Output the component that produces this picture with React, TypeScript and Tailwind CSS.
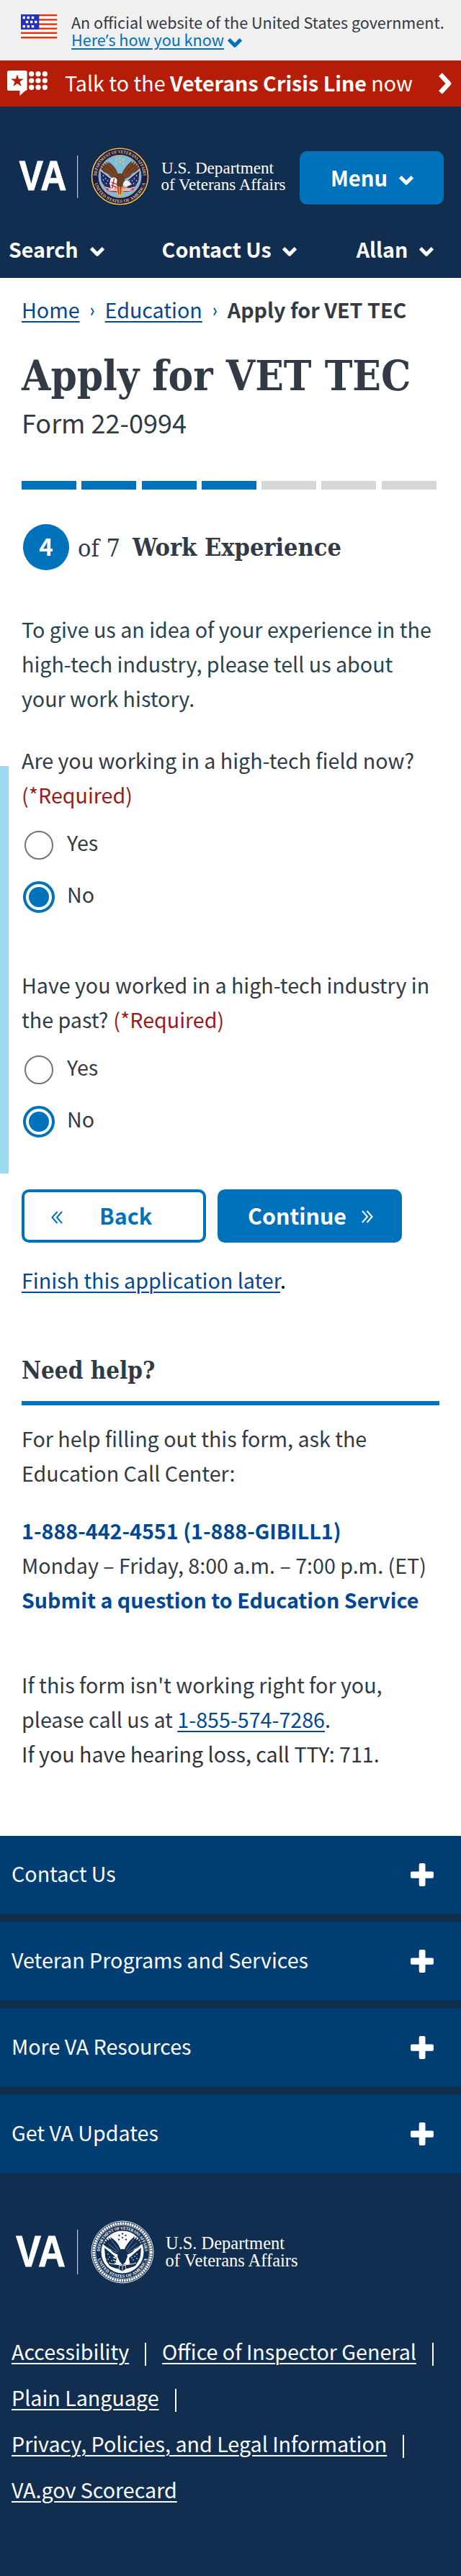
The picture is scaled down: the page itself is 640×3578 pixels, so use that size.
import React from 'react';

const SERIF = '"Liberation Serif", serif';

function ChevronDown({ className = '' }: { className?: string }) {
  return (
    <svg className={className} width="22" height="15" viewBox="0 0 22 15" fill="none">
      <path d="M2.6 2.8 11 11.2l8.4-8.4" stroke="currentColor" strokeWidth="5" strokeLinejoin="round" />
    </svg>
  );
}

function Flag() {
  const stripes = [0, 6.2, 12.4, 18.5, 24.6, 31];
  const stars = [
    [2.6, 2.8], [8.6, 2.8], [14.8, 2.8],
    [6.8, 8.8], [13, 8.8], [19, 8.8],
    [2.6, 15], [8.6, 15], [14.8, 15],
  ];
  return (
    <svg width="50" height="34" viewBox="0 0 50 34" className="mt-px shrink-0">
      <rect width="50" height="33" fill="#fff" />
      {stripes.map((y) => <rect key={y} y={y} width="50" height="2.4" fill="#f42c02" />)}
      <rect width="25.3" height="21" fill="#2131c4" />
      {stars.map(([x, y]) => <rect key={`${x}-${y}`} x={x} y={y} width="3.4" height="3.4" fill="#fff" />)}
    </svg>
  );
}

function CrisisIcon() {
  return (
    <svg width="57" height="36" viewBox="0 0 57 36" className="shrink-0">
      <path d="M2.5 0h22.6a2.5 2.5 0 0 1 2.5 2.5v23a2.5 2.5 0 0 1-2.5 2.5L17.5 35V28H2.5A2.5 2.5 0 0 1 0 25.500V2.500A2.500 2.500 0 0 1 2.500 0z" fill="#fff" />
      <path d="M14 5.200l2.100 6.300h6.900l-5.500 4 2.100 6.500-5.600-4-5.600 4 2.100-6.500-5.500-4h6.900z" fill="#b51d09" />
      {[33.7, 43, 52.3].map((x) => [4.7, 14, 23.3].map((y) => <circle key={`${x}-${y}`} cx={x} cy={y} r="3.6" fill="#fff" />))}
    </svg>
  );
}

function Wings({ fill, line }: { fill: string; line: string }) {
  return (
    <>
      <path d="M-2-1C-4-9-8-15-17-21l1.500 4-4.500-3.500 1.500 4.500-5-3 2 4.500-5-2 3 4.500-4-1c2 5 6 8 11 9.500C-14 1-9 3-5 4z" fill={fill} />
      <path d="M2-1C4-9 9-15 17-22l-1 4.500 4.500-4-1.500 5 5.500-3.500-2.500 5 5-2-3 4.500 4-1c-2 5-6 8-11 9.500C14 1 9 3 5 4z" fill={fill} />
      <path d="M-4-1-15-16M-6 0l-14-12M-8 1l-14-8M4-1 15-17M6 0l14-13M8 1l14-9" stroke={line} strokeWidth=".7" fill="none" />
      <path d="M-5-2C-3-5 3-5 5-2l2 8-3 8-4 4-4-5-3-7z" fill={fill} />
    </>
  );
}

function Stars({ fill }: { fill: string }) {
  const pts = [[-4.5, -23], [4.500, -23], [0, -20], [-5, -17.500], [5, -17.500], [0, -25.500]];
  return (
    <>
      {pts.map(([x, y]) => (
        <path key={`${x}-${y}`} transform={`translate(${x} ${y})`} d="M0-2 .5-.6 1.900-.6.800.3 1.200 1.600 0 .8-1.200 1.600-.8.3-1.900-.6-.5-.6z" fill={fill} />
      ))}
    </>
  );
}

function RingText({ id, fill, top, bottom, size }: { id: string; fill: string; top: number; bottom: number; size: number }) {
  return (
    <>
      <defs>
        <path id={`${id}-top`} d={`M${-top} 0A${top} ${top} 0 0 1 ${top} 0`} />
        <path id={`${id}-bottom`} d={`M${-bottom} 0A${bottom} ${bottom} 0 0 0 ${bottom} 0`} />
      </defs>
      <text fontFamily={SERIF} fontWeight="700" fontSize={size} fill={fill}>
        <textPath href={`#${id}-top`} startOffset="1" textLength={top * 3.14 - 2} lengthAdjust="spacingAndGlyphs">DEPARTMENT OF VETERANS AFFAIRS</textPath>
      </text>
      <text fontFamily={SERIF} fontWeight="700" fontSize={size} fill={fill}>
        <textPath href={`#${id}-bottom`} startOffset={bottom * 0.27} textLength={bottom * 2.6} lengthAdjust="spacingAndGlyphs">UNITED STATES OF AMERICA</textPath>
      </text>
    </>
  );
}

function ColorSeal() {
  return (
    <g transform="translate(166.500 245)">
      <circle r="40.700" fill="#16163c" />
      <circle r="39" fill="#1d1b4e" stroke="#e9bd3a" strokeWidth="1.700" />
      <circle r="29.500" fill="#7dbbdc" stroke="#d9b54a" strokeWidth=".9" />
      <RingText id="seal" fill="#d8c482" top={32.2} bottom={36.6} size={6.2} />
      <Stars fill="#f2d23c" />
      <path d="M-27-8-7 7-10 19C-18 17-24 12-26 6z" fill="#232a66" />
      <path d="M27-8 8 7l3 12C18 17 24 12 26 5z" fill="#232a66" />
      <path d="M-27.500-8.500-6 8M27.500-9.500 6 9" stroke="#e9e4cf" strokeWidth="1" />
      <g fill="#fff">
        {[[-23, -1], [-20, 3], [-23, 5], [-17, 6], [-19, 10], [-14, 10], [23, -1], [20, 3], [23, 6], [17, 6], [19, 10], [15, 10], [13, 6]].map(([x, y]) => (
          <circle key={`${x}-${y}`} cx={x} cy={y} r=".8" />
        ))}
      </g>
      <path d="M-23 12C-14 19-6 14-1 16 6 14 14 19 23 12l-5 7C10 23 4 20 0 24-6 20-12 23-18 19z" fill="#c8283c" />
      <path d="M-20 15c6 3 12 1 18 3M20 15c-6 3-12 1-18 3M-16 18.500c5 1 9 0 13 1M16 18.500c-5 1-9 0-13 1" stroke="#fff" strokeWidth="1.300" fill="none" />
      <Wings fill="#6b3d22" line="#94603a" />
      <path d="M-13 4c3-4 8-3 9 1l-1 9-6 5c-3-4-4-10-2-15z" fill="#fff" />
      <path d="m-12 8 7 3M-12 12l7 3M-8 3l-3 14" stroke="#c8283c" strokeWidth="1.500" />
      <path d="M5 8c4-4 9-2 10 3-4 4-8 4-11 1z" fill="#f2f2f2" />
      <path d="m14 10 3 1.500-3 1z" fill="#e9bd3a" />
      <path d="m-5 14 3 13M-1 14l1 14M3 14 2 27M6 13 4 23" stroke="#e3b53b" strokeWidth="1.500" />
      <path d="m-3 15 1.500 10M1 15v10" stroke="#c8283c" strokeWidth="1.200" />
    </g>
  );
}

function MonoSeal() {
  return (
    <g transform="translate(170 3128)">
      <circle r="43" fill="none" stroke="#fff" strokeWidth=".9" />
      <circle r="39.800" fill="none" stroke="#fff" strokeWidth="3.600" strokeDasharray="2.500 .9" />
      <circle r="37.400" fill="none" stroke="#fff" strokeWidth=".6" />
      <circle r="29.500" fill="#fff" />
      <RingText id="footer-seal" fill="#fff" top={31.2} bottom={35.6} size={6.2} />
      <Stars fill="#112e51" />
      <path d="M-25-6-8 8-10 20C-18 17-23 12-24 6zM26-6 9 8l2 12C18 17 24 12 25 5z" fill="#112e51" />
      <path d="M-24 10C-14 19-6 16-1 18 6 16 14 19 23 11l-5 8C10 23 4 22 0 27-6 22-12 23-18 19z" fill="#112e51" />
      <path d="M-19 15c6 3 12 1 18 4M19 15c-6 3-12 1-18 4" stroke="#fff" strokeWidth="1" fill="none" />
      <Wings fill="#112e51" line="#8fa0b4" />
      <path d="M-27-9.500-8 6M27-10 7 9" stroke="#fff" strokeWidth="2.200" />
      <g fill="#fff">
        {[[-20, 3], [-18, 7], [-20, 10], [-15, 12], [20, 3], [17, 6], [20, 9], [15, 11], [13, 8]].map(([x, y]) => (
          <circle key={`${x}-${y}`} cx={x} cy={y} r=".8" />
        ))}
      </g>
      <path d="m-13 7 7 3M-13 11l7 3M-11 15l7 3M-9 4l-2 5" stroke="#fff" strokeWidth="1.300" />
      <path d="m-4 18-1 7M0 18v9M4 18l1 7" stroke="#fff" strokeWidth=".8" />
    </g>
  );
}

function HeaderLogo() {
  return (
    <svg width="380" height="84" viewBox="26 203 380 84" className="shrink-0 overflow-visible" fill="#fff">
      <text x="26.500" y="264" fontFamily='"Liberation Sans", sans-serif' fontWeight="700" fontSize="58" textLength="66" lengthAdjust="spacingAndGlyphs" stroke="#fff" strokeWidth=".8">VA</text>
      <rect x="107" y="216" width="1.200" height="59" fill="#c5cbd3" />
      <ColorSeal />
      <text x="224" y="240.500" fontFamily={SERIF} fontWeight="400" fontSize="23.600" textLength="156" lengthAdjust="spacingAndGlyphs">U.S. Department</text>
      <text x="223.500" y="263.500" fontFamily={SERIF} fontWeight="400" fontSize="23.600" textLength="173" lengthAdjust="spacingAndGlyphs">of Veterans Affairs</text>
    </svg>
  );
}

function FooterLogo() {
  return (
    <svg width="400" height="90" viewBox="20 3083 400 90" className="overflow-visible" fill="#fff">
      <text x="22" y="3148" fontFamily='"Liberation Sans", sans-serif' fontWeight="700" fontSize="61" textLength="69" lengthAdjust="spacingAndGlyphs" stroke="#fff" strokeWidth=".8">VA</text>
      <rect x="107" y="3097" width="1.200" height="62" fill="#c5cbd3" />
      <MonoSeal />
      <text x="230" y="3123.500" fontFamily={SERIF} fontSize="25" textLength="165" lengthAdjust="spacingAndGlyphs">U.S. Department</text>
      <text x="229.500" y="3148" fontFamily={SERIF} fontSize="25" textLength="184" lengthAdjust="spacingAndGlyphs">of Veterans Affairs</text>
    </svg>
  );
}

function Radio({ label, checked = false }: { label: string; checked?: boolean }) {
  return (
    <label className="flex h-12 items-start">
      {checked ? (
        <span className="mt-[6px] ml-[2px] flex size-[44px] shrink-0 items-center justify-center rounded-full border-4 border-[#0071bb] bg-white">
          <span className="size-[28px] rounded-full bg-[#0071bb]" />
        </span>
      ) : (
        <span className="mt-[8px] mr-[2px] ml-[4px] size-[40px] shrink-0 rounded-full border-2 border-[#757575] bg-white" />
      )}
      <span className="ml-[17px]">{label}</span>
    </label>
  );
}

function Question({ first, second = '', className = '' }: { first: string; second?: string; className?: string }) {
  return (
    <fieldset className={className}>
      <legend className="mb-[18px]">
        <span className="block">{first}</span>
        <span className="flex gap-[7px]">
          {second && <span>{second}</span>}
          <span className="text-[#981b1e]">(*Required)</span>
        </span>
      </legend>
      <div className="flex flex-col gap-6">
        <Radio label="Yes" />
        <Radio label="No" checked />
      </div>
    </fieldset>
  );
}

function FooterRow({ label }: { label: string }) {
  return (
    <button className="flex h-[108px] w-full items-center justify-between bg-[#003e73] pr-[38px] pl-4 text-left">
      <span className="mb-[4px]">{label}</span>
      <svg width="32" height="32" viewBox="0 0 32 32" fill="#fff">
        <rect y="11.500" width="32" height="9.300" rx="2" />
        <rect x="11.700" width="8.800" height="32" rx="2" />
      </svg>
    </button>
  );
}

function FooterLink({ label, bar = true }: { label: string; bar?: boolean }) {
  return (
    <>
      <a className="underline decoration-2 underline-offset-[4px]">{label}</a>
      {bar && <span className="mx-[22px] mt-[8px] h-8 w-[2px] bg-white" />}
    </>
  );
}

const NAV = [
  { label: 'Search', space: 'ml-[12px]', gap: 'gap-[15px]' },
  { label: 'Contact Us', space: 'ml-[79px]', gap: 'gap-[14px]' },
  { label: 'Allan', space: 'ml-[82px]', gap: 'gap-[15px]' },
];

const LINK = 'text-[#004795] underline decoration-2 underline-offset-[4px]';

export default function App() {
  return (
    <div className="w-[640px] overflow-hidden bg-white font-['Noto_Sans_CJK_SC','Noto_Sans',sans-serif] text-[28.650px] leading-[48px] whitespace-nowrap text-[#323a45]">
      <div className="flex h-[84px] bg-[#f0f0f0] pt-[19px] pl-[29px] text-[21.570px] leading-[24px]">
        <Flag />
        <div className="ml-[20px]">
          <p>An official website of the United States government.</p>
          <p className="flex items-center text-[#0071bb]">
            <span className="underline decoration-2 underline-offset-[3px]">
              Here<span className="font-['Open_Sans'] leading-none">’</span>s how you know
            </span>
            <ChevronDown className="mt-[8px] ml-[4px]" />
          </p>
        </div>
      </div>

      <div className="flex h-16 items-center bg-[#b51d09] pl-[10px] text-white">
        <CrisisIcon />
        <p className="mb-[2px] ml-[23px] w-[485px]">
          Talk to the <b>Veterans Crisis Line</b> now
        </p>
        <svg width="20" height="30" viewBox="0 0 20 30" fill="none" className="ml-[33px]">
          <path d="M3.500 2.500 15 15 3.500 27.500" stroke="#fff" strokeWidth="6.500" strokeLinejoin="round" />
        </svg>
      </div>

      <header className="h-[238px] bg-[#112e51] pt-[55px] font-bold text-white">
        <div className="flex h-[84px] items-center pl-[26px]">
          <HeaderLogo />
          <button className="mt-[4px] ml-[10px] flex h-[74px] w-[200px] items-center justify-center gap-[15px] rounded-[10px] bg-[#0071bb] text-[29.200px]">
            <span className="mb-[3px] ml-[2px]">Menu</span>
            <ChevronDown className="mt-[6px]" />
          </button>
        </div>
        <nav className="mt-[43px] flex leading-8">
          {NAV.map((n) => (
            <a key={n.label} className={`flex items-center ${n.space} ${n.gap}`}>
              {n.label}
              <ChevronDown className="mt-[6px]" />
            </a>
          ))}
        </nav>
      </header>

      <main className="h-[2164px] px-[30px] pt-[20px]">
        <div className="flex">
          <a className={LINK}>Home</a>
          <span className="w-[35px] text-center font-['Lato'] text-[26px] text-[#004795]">›</span>
          <a className={LINK}>Education</a>
          <span className="w-[35px] text-center font-['Lato'] text-[26px] text-[#004795]">›</span>
          <b>Apply for VET TEC</b>
        </div>
        <h1 className="mt-[36px] font-['DejaVu_Serif_Condensed','DejaVu_Serif',serif] text-[57.840px] leading-[64px] font-bold">Apply for VET TEC</h1>
        <p className="mt-[8px] text-[36px]">Form 22-0994</p>

        <div className="mt-[58px] flex h-3 gap-[7.300px]">
          {[1, 2, 3, 4, 5, 6, 7].map((n) => (
            <div key={n} className={`w-[76px] ${n <= 4 ? 'bg-[#0071bb]' : 'bg-[#d6d7d9]'}`} />
          ))}
        </div>

        <div className="mt-12 flex h-16 items-center font-['DejaVu_Serif_Condensed','DejaVu_Serif',serif] text-[34px] leading-[64px]">
          <span className="ml-[2px] flex size-16 items-center justify-center rounded-full bg-[#0071bb] font-['Noto_Sans_CJK_SC',sans-serif] text-[33px] font-bold text-white">
            <span className="mb-[4px]">4</span>
          </span>
          <span className="ml-[12px] w-[76px] pt-[2px]">of 7</span>
          <b className="mb-[1px]">Work Experience</b>
        </div>

        <p className="mt-[58px] text-[#29434e]">
          To give us an idea of your experience in the
          <br />
          high-tech industry, please tell us about
          <br />
          your work history.
        </p>

        <form className="relative mt-[38px]">
          <span className="absolute top-[32px] -left-[30px] h-[566px] w-[12px] bg-[#9bdaf1]" />
          <Question first="Are you working in a high-tech field now?" />
          <Question first="Have you worked in a high-tech industry in" second="the past?" className="mt-[78px]" />
        </form>

        <div className="mt-[74px] flex gap-4 text-[30.400px] font-bold">
          <button className="flex h-[74px] w-[256px] items-center rounded-[10px] border-4 border-[#0071bb] text-[#0071bb]">
            <svg width="16" height="18" viewBox="0 0 16 18" fill="none" className="mt-[4px] ml-[37px]">
              <path d="M8.500 1 1.500 9l7 8M15 1 8 9l7 8" stroke="currentColor" strokeWidth="2" />
            </svg>
            <span className="mb-[3px] ml-[51px]">Back</span>
          </button>
          <button className="flex h-[74px] w-[256px] items-center rounded-[10px] bg-[#0071bb] text-white">
            <span className="mb-[3px] ml-[42px] w-[158px] text-left">Continue</span>
            <svg width="16" height="18" viewBox="0 0 16 18" fill="none" className="mt-[2px]">
              <path d="m1 1 7 8-7 8M7.500 1l7 8-7 8" stroke="currentColor" strokeWidth="2" />
            </svg>
          </button>
        </div>
        <p className="mt-[28px] text-black">
          <a className={LINK}>Finish this application later</a>.
        </p>

        <h2 className="mt-[78px] h-[72px] border-b-[6px] border-[#0071bb] font-['DejaVu_Serif_Condensed','DejaVu_Serif',serif] text-[32.900px] font-bold">Need help?</h2>
        <p className="mt-[22px]">
          For help filling out this form, ask the
          <br />
          Education Call Center:
        </p>
        <p className="mt-[32px]">
          <b className="text-[#004795]">1-888-442-4551 (1-888-GIBILL1)</b>
          <br />
          Monday – Friday, 8:00 a.m. – 7:00 p.m. (ET)
          <br />
          <b className="text-[#004795]">Submit a question to Education Service</b>
        </p>
        <p className="mt-[70px]">
          If this form isn't working right for you,
          <br />
          please call us at <a className={LINK}>1-855-574-7286</a>.
          <br />
          <span className="text-[#2e343b]">If you have hearing loss, call TTY: 711.</span>
        </p>
      </main>

      <footer className="h-[1028px] bg-[#112e51] text-white">
        <div className="flex flex-col gap-3">
          <FooterRow label="Contact Us" />
          <FooterRow label="Veteran Programs and Services" />
          <FooterRow label="More VA Resources" />
          <FooterRow label="Get VA Updates" />
        </div>
        <div className="mt-[65px] ml-[20px] h-[90px]">
          <FooterLogo />
        </div>
        <div className="mt-[61px] pl-4 leading-[64px]">
          <div className="flex items-center">
            <FooterLink label="Accessibility" />
            <FooterLink label="Office of Inspector General" />
          </div>
          <div className="flex items-center">
            <FooterLink label="Plain Language" />
          </div>
          <div className="flex items-center">
            <FooterLink label="Privacy, Policies, and Legal Information" />
          </div>
          <div className="flex items-center">
            <FooterLink label="VA.gov Scorecard" bar={false} />
          </div>
        </div>
      </footer>
    </div>
  );
}
